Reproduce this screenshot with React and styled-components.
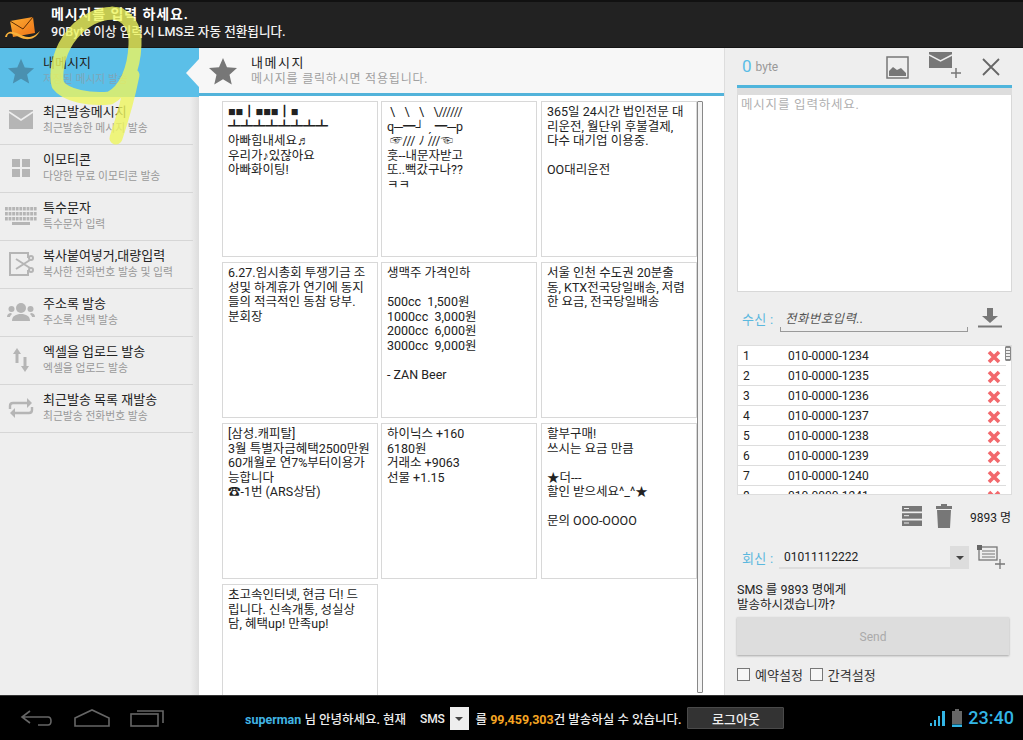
import React from "react";
import styled, { createGlobalStyle } from "styled-components";

const FONT = `Roboto, "Noto Sans CJK KR", sans-serif`;
const Global = createGlobalStyle`
  html, body { margin: 0; padding: 0; background: #000; overflow: hidden; }
  body { font-family: ${FONT}; }
  * { box-sizing: border-box; }
`;

const Page = styled.div`
  position: relative; width: 1023px; height: 740px; display: flex; flex-direction: column;
  overflow: hidden; font-family: ${FONT};
`;
const TopBar = styled.header`
  height: 48px; flex: none; background: #222; border-top: 2px solid #111; border-bottom: 1px solid #151515;
  display: flex; align-items: center; padding-left: 5px; color: #fff;
`;
const Logo = styled.svg` width: 36px; height: 25px; flex: none; margin-right: 10px; margin-top: 10px; `;
const TopText = styled.div` display: flex; flex-direction: column; gap: 0; margin-top: -4px; `;
const TopTitle = styled.div` font-size: 14px; font-weight: 700; line-height: 17px; letter-spacing: .9px; `;
const TopSub = styled.div` font-size: 12.6px; font-weight: 500; line-height: 17px; color: #f2f2f2; `;

const Middle = styled.div` flex: 1; display: flex; min-height: 0; `;
const Sidebar = styled.nav`
  width: 199px; flex: none; background: linear-gradient(90deg, #eee 0, #eee 190px, #ddd 199px);
  display: flex; flex-direction: column; position: relative;
`;
const NavItem = styled.div`
  height: ${p => (p.$active ? "49px" : "48px")}; display: flex; align-items: center; position: relative; width: ${p => (p.$active ? "199px" : "193px")};
  background: ${p => (p.$active ? "#5bbfe8" : "transparent")};
  border-bottom: 1px solid ${p => (p.$active ? "#5bbfe8" : "#d6d6d6")};
  padding-bottom: 2px;
`;
const NavIcon = styled.div` width: 43px; flex: none; display: flex; justify-content: center; padding-right: 1px; `;
const NavText = styled.div` display: flex; flex-direction: column; `;
const NavTitle = styled.div` font-size: 13px; line-height: 18px; color: #222; `;
const NavSub = styled.div` font-size: 10.8px; line-height: 16px; color: ${p => (p.$active ? "#7fa6b8" : "#999")}; `;
const Notch = styled.div`
  position: absolute; right: 0; top: 11px; width: 13px; height: 28px; background: #f7f7f7;
  clip-path: polygon(100% 0, 0 50%, 100% 100%);
`;

const Main = styled.main`
  width: 525px; flex: none; background: #fff; display: flex; flex-direction: column; min-height: 0;
`;
const MainHead = styled.div`
  height: 48px; flex: none; background: #f7f7f7; border-bottom: 3px solid #52b3da; display: flex; align-items: center; padding-left: 8px;
`;
const HeadStar = styled.svg` width: 32px; height: 30px; margin-right: 12px; flex: none; `;
const HeadText = styled.div` display: flex; flex-direction: column; `;
const HeadTitle = styled.div` font-size: 13px; line-height: 17px; color: #222; letter-spacing: 1.5px; `;
const HeadSub = styled.div` font-size: 12px; line-height: 16px; color: #a0a0a0; letter-spacing: .8px; `;
const ScrollWrap = styled.div` flex: 1; min-height: 0; overflow: hidden; display: flex; padding: 5px 0 0 23px; `;
const CardGrid = styled.div`
  width: 475px; display: grid; grid-template-columns: 159px 160px 156px; grid-auto-rows: 156px; row-gap: 5px;
`;
const Card = styled.div`
  width: 156px; border: 1px solid #d8d8d8; background: #fff; padding: 3px 5px 0; font-size: 12.5px; line-height: 14.5px; color: #222; white-space: pre;
  overflow: hidden; font-family: Roboto, "Liberation Sans", "Noto Sans CJK KR", sans-serif;
`;
const Bar = styled.div` width: 6px; height: 592px; border: 1px solid #888; border-radius: 1px; background: #f4f4f4; flex: none; `;

const Right = styled.aside`
  flex: 1; background: #eee; border-left: 1px solid #ddd; padding: 0 11px 0 12px; display: flex; flex-direction: column;
`;
const ByteRow = styled.div` height: 37px; flex: none; display: flex; align-items: center; padding-left: 5px; padding-bottom: 1px; `;
const Zero = styled.span` color: #5bbde6; font-size: 17px; margin-right: 4px; `;
const ByteLabel = styled.span` color: #999; font-size: 12px; padding-top: 2px; `;
const ByteIcons = styled.div` margin-left: auto; display: flex; align-items: center; `;
const IconImage = styled.svg` margin-right: 20px; margin-top: 2px; `;
const IconMail = styled.svg` margin-right: 19px; margin-top: -2px; `;
const IconClose = styled.svg` margin-right: 11px; margin-top: 2px; `;
const Stripe = styled.div` height: 10px; flex: none; border-top: 3px solid #4fb5dc; background: #ddd; `;
const TextBox = styled.div`
  height: 197px; flex: none; border: 1px solid #d8d8d8; border-top: none; background: #fff; padding: 2px 3px; font-size: 12.5px; line-height: 16px; color: #b0b0b0; letter-spacing: .8px;
`;
const FieldRow = styled.div` display: flex; align-items: center; padding-left: 5px; flex: none; margin-top: ${p => p.$top}px; `;
const FieldLabel = styled.span` color: #5bb8de; font-size: 13px; width: 38px; flex: none; letter-spacing: .3px; `;
const PhoneInput = styled.div`
  width: 188px; height: 27px; border-bottom: 1px solid #999; position: relative; padding: 5px 0 0 5px;
  font-size: 12.5px; font-style: italic; color: #555; line-height: 18px; letter-spacing: .4px;
  &::before, &::after { content: ""; position: absolute; bottom: 0; width: 1px; height: 4px; background: #999; }
  &::before { left: 0; } &::after { right: 0; }
`;
const IconDownload = styled.svg` margin-left: 10px; margin-bottom: 1px; `;
const List = styled.div`
  height: 150px; flex: none; margin-top: 13px; border: 1px solid #ddd; background: #fff; overflow: hidden; position: relative; width: 275px;
`;
const ListRow = styled.div`
  height: 20px; width: 268px; display: flex; align-items: center; border-bottom: 1px solid #ddd; font-size: 12px; color: #222;
`;
const RowNo = styled.span` width: 50px; padding-left: 5px; flex: none; `;
const RowPhone = styled.span` flex: 1; `;
const RowX = styled.svg` width: 14px; height: 14px; margin-right: 5px; margin-top: 3px; flex: none; `;
const Thumb = styled.div`
  position: absolute; right: 0; top: 0; width: 6px; height: 15px; border: 1px solid #888; border-radius: 1px;
  background: repeating-linear-gradient(180deg, #888 0 1px, #eee 1px 3px);
`;
const Stats = styled.div` height: 39px; flex: none; display: flex; align-items: center; justify-content: flex-end; padding-top: 3px; `;
const IconRows = styled.svg` margin-right: 14px; `;
const Count = styled.span` font-size: 12px; color: #222; margin-left: 18px; margin-right: 1px; `;
const ReplySelect = styled.div`
  width: 190px; height: 23px; display: flex; align-items: center; justify-content: space-between; margin-left: -1px;
  border-bottom: 2px solid #ddd; font-size: 12px; color: #222; padding-left: 5px;
`;
const IconGroup = styled.svg` margin-left: 8px; `;
const Caret = styled.div`
  width: ${p => p.$w}px; height: ${p => p.$h}px; background: ${p => p.$bg}; display: flex; align-items: center; justify-content: center; flex: none;
  &::after { content: ""; border-left: 4px solid transparent; border-right: 4px solid transparent; border-top: 4px solid #444; margin-top: 2px; }
`;
const Question = styled.div` margin-top: 12px; font-size: 12.5px; line-height: 15px; color: #222; height: 30px; flex: none; `;
const SendButton = styled.div`
  margin-top: 5px; height: 38px; width: 272px; flex: none; background: #ddd; box-shadow: 0 1px 2px rgba(0,0,0,.3);
  display: flex; align-items: center; justify-content: center; color: #aaa; font-size: 12px; padding-top: 1px;
`;
const CheckRow = styled.div` margin-top: 10px; display: flex; align-items: center; font-size: 13px; color: #333; `;
const Check = styled.span` width: 13px; height: 13px; border: 1px solid #777; background: #f6f6f6; margin-right: 5px; flex: none; `;
const CheckLabel = styled.span` margin-right: 7px; `;

const BottomBar = styled.footer`
  height: 45px; flex: none; background: #000; border-top: 1px solid #333; display: flex; align-items: center; color: #eee; font-size: 12.5px; font-weight: 500;
`;
const NavButtons = styled.div` display: flex; align-items: center; gap: 20px; padding-left: 20px; width: 245px; flex: none; `;
const Blue = styled.span` color: #41b4e4; font-weight: 700; `;
const Orange = styled.span` color: #f6a623; font-weight: 700; `;
const Sms = styled.span` margin: 2px 5px 0 14px; font-size: 12px; letter-spacing: -.2px; `;
const Balance = styled.span` margin-left: 7px; `;
const Logout = styled.div`
  width: 97px; height: 22px; margin-left: 6px; background: #333; border: 1px solid #4a4a4a; border-radius: 1px; display: flex; align-items: center; justify-content: center; font-weight: 500; font-size: 13px; color: #eee; flex: none;
`;
const Status = styled.div` margin-left: auto; display: flex; align-items: center; padding-right: 9px; `;
const Battery = styled.svg` margin-left: 7px; `;
const Time = styled.span` font-size: 18px; color: #33b5e5; font-weight: 500; margin-left: 6px; margin-top: -2px; `;
const Scribble = styled.svg` position: absolute; left: 0; top: 0; width: 160px; height: 150px; pointer-events: none; `;

const Star = ({ fill, size = 28 }) => (
  <svg width={size} height={size} viewBox="0 0 24 24"><path d="M12 1.500l3.200 7.400 8 .7-6 5.300 1.800 7.900L12 18.600l-7 4.200 1.800-7.900-6-5.300 8-.7z" fill={fill} /></svg>
);
const G = "#b5b5b5";
const icons = [
  <Star fill="#4a90b0" />,
  <svg width="24" height="19" viewBox="0 0 24 19"><rect width="24" height="19" fill={G} /><path d="M0 2l12 8 12-8" fill="none" stroke="#eee" strokeWidth="1.600" /></svg>,
  <svg width="18" height="18" viewBox="0 0 18 18" fill={G}><rect width="8" height="8" /><rect x="10" width="8" height="8" /><rect y="10" width="8" height="8" /><rect x="10" y="10" width="8" height="8" /></svg>,
  <svg width="32" height="18" viewBox="0 0 32 18" fill={G}>{[0, 5, 10].map(y => Array.from({ length: 9 }).map((_, i) => <rect key={`${y}${i}`} x={i * 3.6} y={y} width="2.800" height="3.500" />))}<rect x="7" y="15" width="18" height="3" /></svg>,
  <svg width="26" height="26" viewBox="0 0 26 26" fill="none" stroke={G} strokeWidth="2"><path d="M20 7V2H2v22h18v-5" /><path d="M8 8l14 9M8 18l14-9" /><circle cx="23" cy="7" r="2" /><circle cx="23" cy="19" r="2" /></svg>,
  <svg width="28" height="18" viewBox="0 0 28 18" fill={G}><circle cx="14" cy="5" r="5" /><path d="M5 18c0-5 4-7 9-7s9 2 9 7z" /><circle cx="4.500" cy="6" r="3" /><circle cx="23.500" cy="6" r="3" /><path d="M0 14c0-3 2-4 4-4l1 1c-1 1-2 2-2 3zM28 14c0-3-2-4-4-4l-1 1c1 1 2 2 2 3z" /></svg>,
  <svg width="16" height="24" viewBox="0 0 16 24" fill={G}><path d="M4 0l4 6H5.500v9h-3V6H0zM12 24l4-6h-2.500V9h-3v9H8z" /></svg>,
  <svg width="26" height="22" viewBox="0 0 26 22" fill="none" stroke={G} strokeWidth="2.400"><path d="M2 12V9c0-2 1-3 3-3h15" /><path d="M24 10v3c0 2-1 3-3 3H6" /><path d="M19 1l5 5-5 5z" fill={G} stroke="none" /><path d="M7 11l-5 5 5 5z" fill={G} stroke="none" /></svg>,
];
const nav = [
  ["내메시지", "저장된 메시지 발송"],
  ["최근발송메시지", "최근발송한 메시지 발송"],
  ["이모티콘", "다양한 무료 이모티콘 발송"],
  ["특수문자", "특수문자 입력"],
  ["복사붙여넣거,대량입력", "복사한 전화번호 발송 및 입력"],
  ["주소록 발송", "주소록 선택 발송"],
  ["엑셀을 업로드 발송", "엑셀을 업로드 발송"],
  ["최근발송 목록 재발송", "최근발송 전화번호 발송"],
];
const cards = [
  "■■┃■■■┃■\n┻┻┻┻┻┻┻┻\n아빠힘내세요♬\n우리가♪있잖아요\n아빠화이팅!",
  " \\   \\   \\   \\//////\nq─━┘ ˏ ━─p\n ☞/// ﾉ ///☜\n훗--내문자받고\n또..뻑갔구나??\nㅋㅋ",
  "365일 24시간 법인전문 대\n리운전, 월단위 후불결제,\n다수 대기업 이용중.\n\nOO대리운전",
  "6.27.임시총회 투쟁기금 조\n성및 하계휴가 연기에 동지\n들의 적극적인 동참 당부.\n분회장",
  "생맥주 가격인하\n\n500cc  1,500원\n1000cc  3,000원\n2000cc  6,000원\n3000cc  9,000원\n\n- ZAN Beer",
  "서울 인천 수도권 20분출\n동, KTX전국당일배송, 저렴\n한 요금, 전국당일배송",
  "[삼성.캐피탈]\n3월 특별자금혜택2500만원\n60개월로 연7%부터이용가\n능합니다\n☎-1번 (ARS상담)",
  "하이닉스 +160\n6180원\n거래소 +9063\n선물 +1.15",
  "할부구매!\n쓰시는 요금 만큼\n\n★더---\n할인 받으세요^_^★\n\n문의 OOO-OOOO",
  "초고속인터넷, 현금 더! 드\n립니다. 신속개통, 성실상\n담, 혜택up! 만족up!",
];

export default function App() {
  return (
    <Page>
      <Global />
      <TopBar>
        <Logo viewBox="0 0 36 25">
          <defs>
            <linearGradient id="env" x1="0" y1="0" x2="1" y2="1"><stop offset="0" stopColor="#fbb034" /><stop offset="1" stopColor="#f07016" /></linearGradient>
          </defs>
          <path d="M5 4L28 0l2 16-22 4z" fill="url(#env)" />
          <path d="M5 4l13 8L28 0" fill="none" stroke="#5a2c05" strokeWidth="1" />
          <path d="M0 20c2-7 8-6 14-3s12 6 21-3c-5 9-13 10-21 6S3 15 2 20z" fill="#f8b13c" />
        </Logo>
        <TopText>
          <TopTitle>메시지를 입력 하세요.</TopTitle>
          <TopSub>90Byte 이상 입력시 LMS로 자동 전환됩니다.</TopSub>
        </TopText>
      </TopBar>
      <Middle>
        <Sidebar>
          {nav.map(([t, s], i) => (
            <NavItem key={t} $active={i === 0}>
              <NavIcon>{icons[i]}</NavIcon>
              <NavText>
                <NavTitle>{t}</NavTitle>
                <NavSub $active={i === 0}>{s}</NavSub>
              </NavText>
              {i === 0 && <Notch />}
            </NavItem>
          ))}
        </Sidebar>
        <Main>
          <MainHead>
            <HeadStar viewBox="0 0 24 24"><path d="M12 1.500l3.200 7.400 8 .7-6 5.300 1.800 7.900L12 18.600l-7 4.200 1.800-7.900-6-5.300 8-.7z" fill="#777" /></HeadStar>
            <HeadText>
              <HeadTitle>내메시지</HeadTitle>
              <HeadSub>메시지를 클릭하시면 적용됩니다.</HeadSub>
            </HeadText>
          </MainHead>
          <ScrollWrap>
            <CardGrid>
              {cards.map(c => <Card key={c}>{c}</Card>)}
            </CardGrid>
            <Bar />
          </ScrollWrap>
        </Main>
        <Right>
          <ByteRow>
            <Zero>0</Zero><ByteLabel>byte</ByteLabel>
            <ByteIcons>
              <IconImage width="23" height="23" viewBox="0 0 23 23"><rect x="1" y="1" width="21" height="21" fill="none" stroke="#777" strokeWidth="1.500" /><path d="M3 20v-5l4-4 4 3 4-2 5 5v3z" fill="#777" /></IconImage>
              <IconMail width="33" height="27" viewBox="0 0 33 27"><rect width="23" height="16" fill="#777" /><path d="M0 3l11.500 6L23 3" fill="none" stroke="#eee" strokeWidth="1.500" /><path d="M27 16v10M22 21h10" stroke="#777" strokeWidth="1.500" /></IconMail>
              <IconClose width="20" height="20" viewBox="0 0 20 20"><path d="M2 2l16 16M18 2L2 18" stroke="#666" strokeWidth="1.800" /></IconClose>
            </ByteIcons>
          </ByteRow>
          <Stripe />
          <TextBox>메시지를 입력하세요.</TextBox>
          <FieldRow $top={13}>
            <FieldLabel>수신 :</FieldLabel>
            <PhoneInput>전화번호입력..</PhoneInput>
            <IconDownload width="24" height="20" viewBox="0 0 24 20"><path d="M9 0h6v8h5l-8 7-8-7h5z" fill="#777" /><rect y="17.500" width="24" height="2" fill="#777" /></IconDownload>
          </FieldRow>
          <List>
            {Array.from({ length: 8 }).map((_, i) => (
              <ListRow key={i}>
                <RowNo>{i + 1}</RowNo>
                <RowPhone>010-0000-{1234 + i}</RowPhone>
                <RowX viewBox="0 0 14 14"><path d="M2 2l10 10M12 2L2 12" stroke="#f2686c" strokeWidth="3.600" /></RowX>
              </ListRow>
            ))}
            <Thumb />
          </List>
          <Stats>
            <IconRows width="20" height="20" viewBox="0 0 20 20" fill="#777">
              <rect width="20" height="5.500" /><rect y="7.200" width="20" height="5.500" /><rect y="14.500" width="20" height="5.500" />
              <path d="M2 2.500h5M2 9.700h5M2 17h5" stroke="#eee" />
            </IconRows>
            <svg width="16" height="24" viewBox="0 0 16 24" fill="#777"><path d="M5 2V0h6v2h5v3H0V2zM1 6h14l-1 18H2z" /></svg>
            <Count>9893 명</Count>
          </Stats>
          <FieldRow $top={11}>
            <FieldLabel>회신 :</FieldLabel>
            <ReplySelect>01011112222<Caret $w={19} $h={22} $bg="#ddd" /></ReplySelect>
            <IconGroup width="29" height="25" viewBox="0 0 29 25" fill="none" stroke="#777" strokeWidth="1.300">
              <rect x="2" y="2" width="18" height="13" /><path d="M5 6h13M5 9h13M5 12h13" strokeWidth="1" /><rect x="0" y="0" width="5" height="5" fill="#666" stroke="none" /><path d="M23 14v10M18 19h10" />
            </IconGroup>
          </FieldRow>
          <Question>SMS 를 9893 명에게<br />발송하시겠습니까?</Question>
          <SendButton>Send</SendButton>
          <CheckRow>
            <Check /><CheckLabel>예약설정</CheckLabel>
            <Check /><CheckLabel>간격설정</CheckLabel>
          </CheckRow>
        </Right>
      </Middle>
      <BottomBar>
        <NavButtons>
          <svg width="34" height="20" viewBox="0 0 34 20" fill="none" stroke="#666" strokeWidth="1.600"><path d="M10 3L2 9l8 6M2 9h26c4 0 4 8 0 8H18" /></svg>
          <svg width="36" height="20" viewBox="0 0 36 20" fill="none" stroke="#666" strokeWidth="1.600"><path d="M1 18V10L18 2l17 8v8z" /></svg>
          <svg width="34" height="20" viewBox="0 0 34 20" fill="none" stroke="#666" strokeWidth="1.600"><rect x="1" y="6" width="27" height="12" /><path d="M7 3h26v12" /></svg>
        </NavButtons>
        <span><Blue>superman</Blue> 님 안녕하세요. 현재</span>
        <Sms>SMS</Sms>
        <Caret $w={19} $h={23} $bg="#eee" />
        <Balance>를 <Orange>99,459,303</Orange>건 발송하실 수 있습니다.</Balance>
        <Logout>로그아웃</Logout>
        <Status>
          <svg width="15" height="15" viewBox="0 0 15 15" fill="#33b5e5"><path d="M0 15h2v-3H0zM4 15h2V9H4zM8 15h2V5H8z" /><path d="M12 15h3V0h-3z" /></svg>
          <Battery width="10" height="18" viewBox="0 0 10 18"><rect y="2" width="10" height="13" fill="#666" /><rect x="3" width="4" height="2" fill="#666" /><rect y="15.500" width="10" height="2.500" fill="#33b5e5" /></Battery>
          <Time>23:40</Time>
        </Status>
      </BottomBar>
      <Scribble viewBox="0 0 160 150">
        <path d="M120 14C100 10 80 22 68 40C58 55 55 75 58 85C66 96 90 100 110 98C125 90 134 70 135 45C136 28 128 14 112 13M133 75C128 100 122 120 116 138" fill="none" stroke="#eef55e" strokeOpacity=".8" strokeWidth="13" strokeLinecap="round" strokeLinejoin="round" />
      </Scribble>
    </Page>
  );
}
